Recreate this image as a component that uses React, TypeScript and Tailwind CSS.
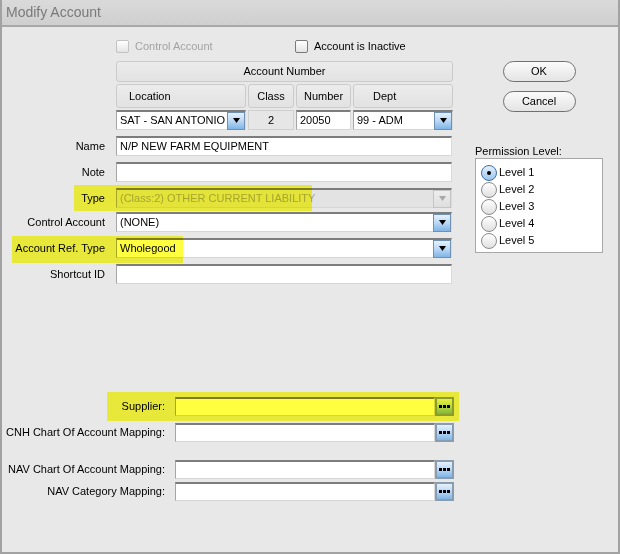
import React from "react";

const font = { fontFamily: '"Liberation Sans", Arial, sans-serif' };

function Arrow({ disabled = false }: { disabled?: boolean }) {
  return (
    <span
      className={`flex h-[18px] w-[18px] shrink-0 items-center justify-center border ${
        disabled
          ? "border-[#c4c4c4] bg-gradient-to-b from-[#eeeeee] to-[#dedede]"
          : "border-[#6f8fb3] bg-gradient-to-b from-[#e6f1fc] via-[#b9d8f6] to-[#7fb5e6]"
      }`}
    >
      <svg width="7" height="5" viewBox="0 0 7 5">
        <path d="M0 0h7L3.5 5z" fill={disabled ? "#a8a8a8" : "#000"} />
      </svg>
    </span>
  );
}

function Dots() {
  return (
    <span className="flex h-[19px] w-[19px] shrink-0 items-center justify-center border-2 border-[#8a9cb0] bg-gradient-to-b from-[#e6f1fc] via-[#b9d8f6] to-[#7fb5e6]">
      <svg width="11" height="3" viewBox="0 0 11 3">
        <rect x="0" y="0" width="3" height="3" fill="#000" />
        <rect x="4" y="0" width="3" height="3" fill="#000" />
        <rect x="8" y="0" width="3" height="3" fill="#000" />
      </svg>
    </span>
  );
}

const inset =
  "border-t-[2px] border-t-[#7d7d7d] border-l border-l-[#a6a6a6] border-r border-r-[#dadada] border-b border-b-[#d6d6d6]";

function Field({
  value = "",
  select = false,
  disabled = false,
  w = "w-[336px]",
}: {
  value?: string;
  select?: boolean;
  disabled?: boolean;
  w?: string;
}) {
  return (
    <div
      className={`flex h-[20px] ${w} items-center ${inset} ${
        disabled ? "bg-[#e3e3e3] text-[#a6a6a6]" : "bg-white text-black"
      }`}
    >
      <span className="flex-1 truncate pl-[3px]">{value}</span>
      {select && <Arrow disabled={disabled} />}
    </div>
  );
}

function Header({ label, className }: { label: string; className: string }) {
  return (
    <div
      className={`flex items-center rounded-[3px] border border-[#cbcbcb] bg-gradient-to-b from-[#ececec] to-[#e2e2e2] ${className}`}
    >
      {label}
    </div>
  );
}

function Check({ label, disabled = false }: { label: string; disabled?: boolean }) {
  return (
    <label className={`flex items-center gap-[6px] ${disabled ? "text-[#a3a3a3]" : "text-black"}`}>
      <span
        className={`h-[13px] w-[13px] shrink-0 rounded-[2px] border bg-gradient-to-b from-white to-[#e4e4e4] ${
          disabled ? "border-[#c2c2c2]" : "border-[#7a7a7a]"
        }`}
      />
      {label}
    </label>
  );
}

function FormRow({
  label,
  children,
  highlight,
}: {
  label: string;
  children: React.ReactNode;
  highlight?: string;
}) {
  return (
    <div className="relative flex items-center">
      <span className="w-[114px] pr-[11px] text-right">{label}</span>
      {children}
      {highlight && <span className={`pointer-events-none absolute bg-[#ffff40] mix-blend-multiply ${highlight}`} />}
    </div>
  );
}

function LookupRow({
  label,
  highlight,
}: {
  label: string;
  highlight?: boolean;
}) {
  return (
    <div className="relative flex items-center">
      <span className="w-[173px] pr-[10px] text-right">{label}</span>
      <div className={`h-[19px] w-[260px] bg-white ${inset}`} />
      <Dots />
      {highlight && (
        <span className="pointer-events-none absolute left-[105px] top-[-5px] h-[29px] w-[352px] bg-[#ffff40] mix-blend-multiply" />
      )}
    </div>
  );
}

function Radio({ label, checked = false }: { label: string; checked?: boolean }) {
  return (
    <div className="flex h-[17px] items-center gap-[2px]">
      <span
        className={`flex h-[16px] w-[16px] shrink-0 items-center justify-center rounded-full border ${
          checked
            ? "border-[#3a6ea5] bg-gradient-to-b from-[#e4f0fc] to-[#9cc6ee]"
            : "border-[#8a8a8a] bg-gradient-to-b from-white to-[#e0e0e0]"
        }`}
      >
        {checked && <span className="h-[4px] w-[4px] rounded-full bg-black" />}
      </span>
      {label}
    </div>
  );
}

function Button({ label }: { label: string }) {
  return (
    <button className="flex h-[21px] w-[73px] items-center justify-center rounded-full border border-[#707070] bg-gradient-to-b from-[#fbfbfb] to-[#e4e4e4] text-black">
      {label}
    </button>
  );
}

export default function App() {
  return (
    <div
      className="flex h-[554px] w-[620px] flex-col border-2 border-t-0 border-[#a2a2a2] bg-[#e8e8e8] text-[11px] text-black"
      style={font}
    >
      <div className="flex h-[27px] shrink-0 items-center border-b-2 border-[#a8a8a8] bg-gradient-to-b from-[#dadada] to-[#cfcfcf] px-[4px] text-[14px] text-[#7a7a7a]">
        Modify Account
      </div>

      <div className="flex flex-1 flex-col">
        <div className="flex">
          <div className="flex w-[460px] flex-col pt-[12px]">
            <div className="ml-[114px] flex h-[14px] items-center gap-[40px]">
              <div className="w-[139px]">
                <Check label="Control Account" disabled />
              </div>
              <Check label="Account is Inactive" />
            </div>

            <div className="ml-[114px] mt-[8px] flex w-[337px] flex-col gap-[2px]">
              <Header label="Account Number" className="h-[21px] justify-center" />
              <div className="flex gap-[2px]">
                <Header label="Location" className="h-[24px] w-[130px] pl-[12px]" />
                <Header label="Class" className="h-[24px] w-[46px] justify-center" />
                <Header label="Number" className="h-[24px] w-[55px] justify-center" />
                <Header label="Dept" className="h-[24px] flex-1 pl-[19px]" />
              </div>
              <div className="flex gap-[2px]">
                <Field value="SAT - SAN ANTONIO" select w="w-[130px]" />
                <div className="flex h-[20px] w-[46px] items-center justify-center border border-[#d0d0d0] bg-[#e6e6e6]">
                  2
                </div>
                <Field value="20050" w="w-[55px]" />
                <Field value="99 - ADM" select w="flex-1" />
              </div>
            </div>

            <div className="mt-[6px] flex flex-col">
              <FormRow label="Name">
                <Field value="N/P NEW FARM EQUIPMENT" />
              </FormRow>
              <div className="mt-[6px]">
                <FormRow label="Note">
                  <Field />
                </FormRow>
              </div>
              <div className="mt-[6px]">
                <FormRow label="Type" highlight="left-[72px] top-[-3px] h-[26px] w-[238px]">
                  <Field value="(Class:2) OTHER CURRENT LIABILITY" select disabled />
                </FormRow>
              </div>
              <div className="mt-[4px]">
                <FormRow label="Control Account">
                  <Field value=" (NONE)" select />
                </FormRow>
              </div>
              <div className="mt-[6px]">
                <FormRow label="Account Ref. Type" highlight="left-[10px] top-[-2px] h-[27px] w-[171px]">
                  <Field value="Wholegood" select />
                </FormRow>
              </div>
              <div className="mt-[6px]">
                <FormRow label="Shortcut ID">
                  <Field />
                </FormRow>
              </div>
            </div>
          </div>

          <div className="ml-[13px] flex w-[128px] flex-col pt-[34px]">
            <div className="flex flex-col items-center gap-[9px]">
              <Button label="OK" />
              <Button label="Cancel" />
            </div>
            <span className="mt-[31px] h-[14px]">Permission Level:</span>
            <div className="mt-[1px] flex h-[95px] flex-col border border-[#a8a8a8] bg-white pl-[5px] pt-[5px]">
              <Radio label="Level 1" checked />
              <Radio label="Level 2" />
              <Radio label="Level 3" />
              <Radio label="Level 4" />
              <Radio label="Level 5" />
            </div>
          </div>
        </div>

        <div className="mt-[113px] flex flex-col">
          <LookupRow label="Supplier:" highlight />
          <div className="mt-[7px]">
            <LookupRow label="CNH Chart Of Account Mapping:" />
          </div>
          <div className="mt-[18px]">
            <LookupRow label="NAV Chart Of Account Mapping:" />
          </div>
          <div className="mt-[3px]">
            <LookupRow label="NAV Category Mapping:" />
          </div>
        </div>
      </div>
    </div>
  );
}
